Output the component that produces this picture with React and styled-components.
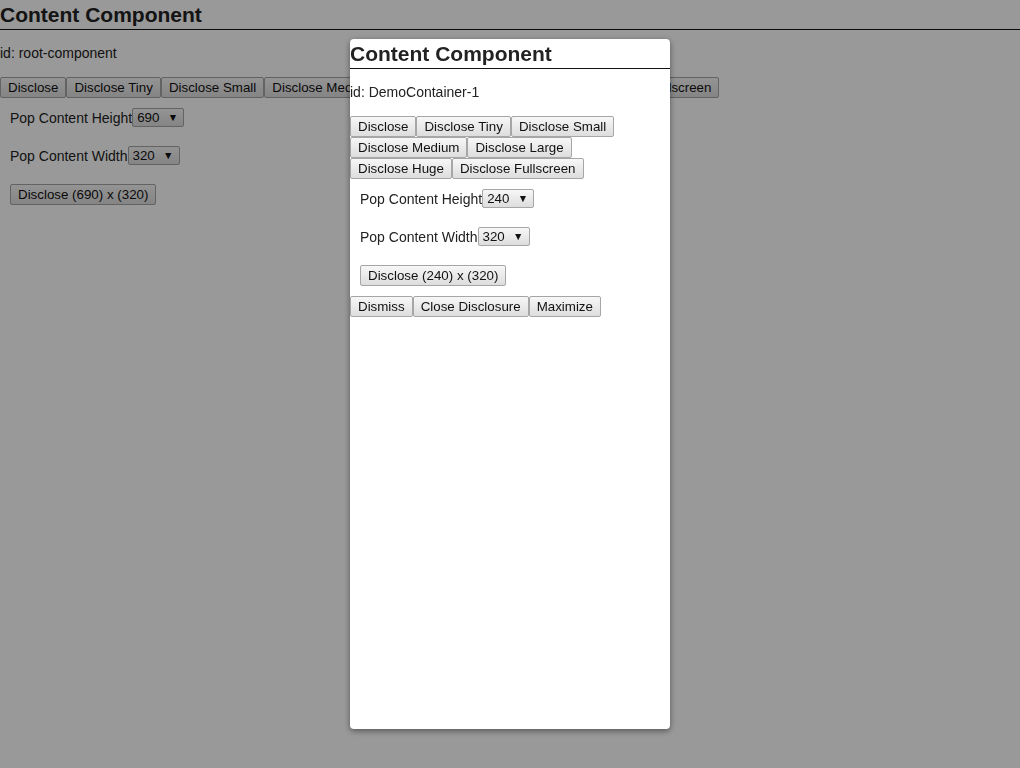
import React, { useState } from "react";
import styled, { createGlobalStyle } from "styled-components";

const GlobalStyle = createGlobalStyle`
  html, body {
    margin: 0;
    padding: 0;
    background: #ffffff;
  }
  body {
    font-family: "Liberation Sans", Arial, sans-serif;
    font-size: 14px;
    color: #222222;
  }
`;

const Page = styled.div`
  width: 100%;
  min-height: 768px;
`;

const Title = styled.h2`
  margin: 0;
  padding: 3px 0 2px;
  font-size: 21px;
  line-height: 24px;
  font-weight: bold;
  color: #222222;
  border-bottom: 1px solid #111111;
  white-space: nowrap;
`;

const IdLine = styled.p`
  margin: 15px 0;
  line-height: 17px;
  white-space: nowrap;
`;

const ButtonBar = styled.div`
  display: flex;
  flex-wrap: wrap;
`;

const Button = styled.button`
  font-family: "Liberation Sans", Arial, sans-serif;
  font-size: 13.3333px;
  line-height: 15px;
  height: 21px;
  padding: 1px 7px;
  margin: 0;
  color: #111111;
  background: linear-gradient(#f7f7f7, #dddddd);
  border: 1px solid #a6a6a6;
  border-radius: 2px;
  white-space: nowrap;
  cursor: pointer;
`;

const Form = styled.div`
  display: flex;
  flex-direction: column;
  align-items: flex-start;
  gap: 19px;
  padding: 10px;
`;

const Field = styled.label`
  display: flex;
  align-items: center;
  height: 19px;
  white-space: nowrap;
`;

const SelectWrap = styled.span`
  position: relative;
  display: inline-block;
  width: 52px;
  height: 19px;

  &::after {
    content: "▼";
    position: absolute;
    right: 6px;
    top: 3px;
    font-size: 10.5px;
    line-height: 12px;
    color: #111111;
    pointer-events: none;
  }
`;

const Select = styled.select`
  appearance: none;
  width: 100%;
  height: 100%;
  margin: 0;
  padding: 0 0 0 4px;
  font-family: "Liberation Sans", Arial, sans-serif;
  font-size: 13.3333px;
  color: #111111;
  background: linear-gradient(#f7f7f7, #dddddd);
  border: 1px solid #a6a6a6;
  border-radius: 2px;
  outline: none;
`;

const Overlay = styled.div`
  position: fixed;
  inset: 0;
  background: rgba(0, 0, 0, 0.4);
  display: flex;
  align-items: center;
  justify-content: center;
`;

const Dialog = styled.div`
  width: ${(p) => p.$w}px;
  height: ${(p) => p.$h}px;
  background: #ffffff;
  border-radius: 4px;
  box-shadow: 0 2px 6px rgba(0, 0, 0, 0.45);
  overflow: hidden;
`;

const sizes = [240, 320, 480, 690];
const buttonNames = [
  "Disclose",
  "Disclose Tiny",
  "Disclose Small",
  "Disclose Medium",
  "Disclose Large",
  "Disclose Huge",
  "Disclose Fullscreen",
];

function ContentComponent({ id, height, width, children }) {
  const [h, setH] = useState(height);
  const [w, setW] = useState(width);

  return (
    <>
      <Title>Content Component</Title>
      <IdLine>id: {id}</IdLine>
      <ButtonBar>
        {buttonNames.map((name) => (
          <Button key={name}>{name}</Button>
        ))}
      </ButtonBar>
      <Form>
        <Field>
          Pop Content Height
          <SelectWrap>
            <Select value={h} onChange={(e) => setH(Number(e.target.value))}>
              {sizes.map((s) => (
                <option key={s} value={s}>{s}</option>
              ))}
            </Select>
          </SelectWrap>
        </Field>
        <Field>
          Pop Content Width
          <SelectWrap>
            <Select value={w} onChange={(e) => setW(Number(e.target.value))}>
              {sizes.map((s) => (
                <option key={s} value={s}>{s}</option>
              ))}
            </Select>
          </SelectWrap>
        </Field>
        <Button>
          Disclose ({h}) x ({w})
        </Button>
      </Form>
      {children}
    </>
  );
}

export default function App() {
  return (
    <Page>
      <GlobalStyle />
      <ContentComponent id="root-component" height={690} width={320} />
      <Overlay>
        <Dialog $w={320} $h={690}>
          <ContentComponent id="DemoContainer-1" height={240} width={320}>
            <ButtonBar>
              <Button>Dismiss</Button>
              <Button>Close Disclosure</Button>
              <Button>Maximize</Button>
            </ButtonBar>
          </ContentComponent>
        </Dialog>
      </Overlay>
    </Page>
  );
}
